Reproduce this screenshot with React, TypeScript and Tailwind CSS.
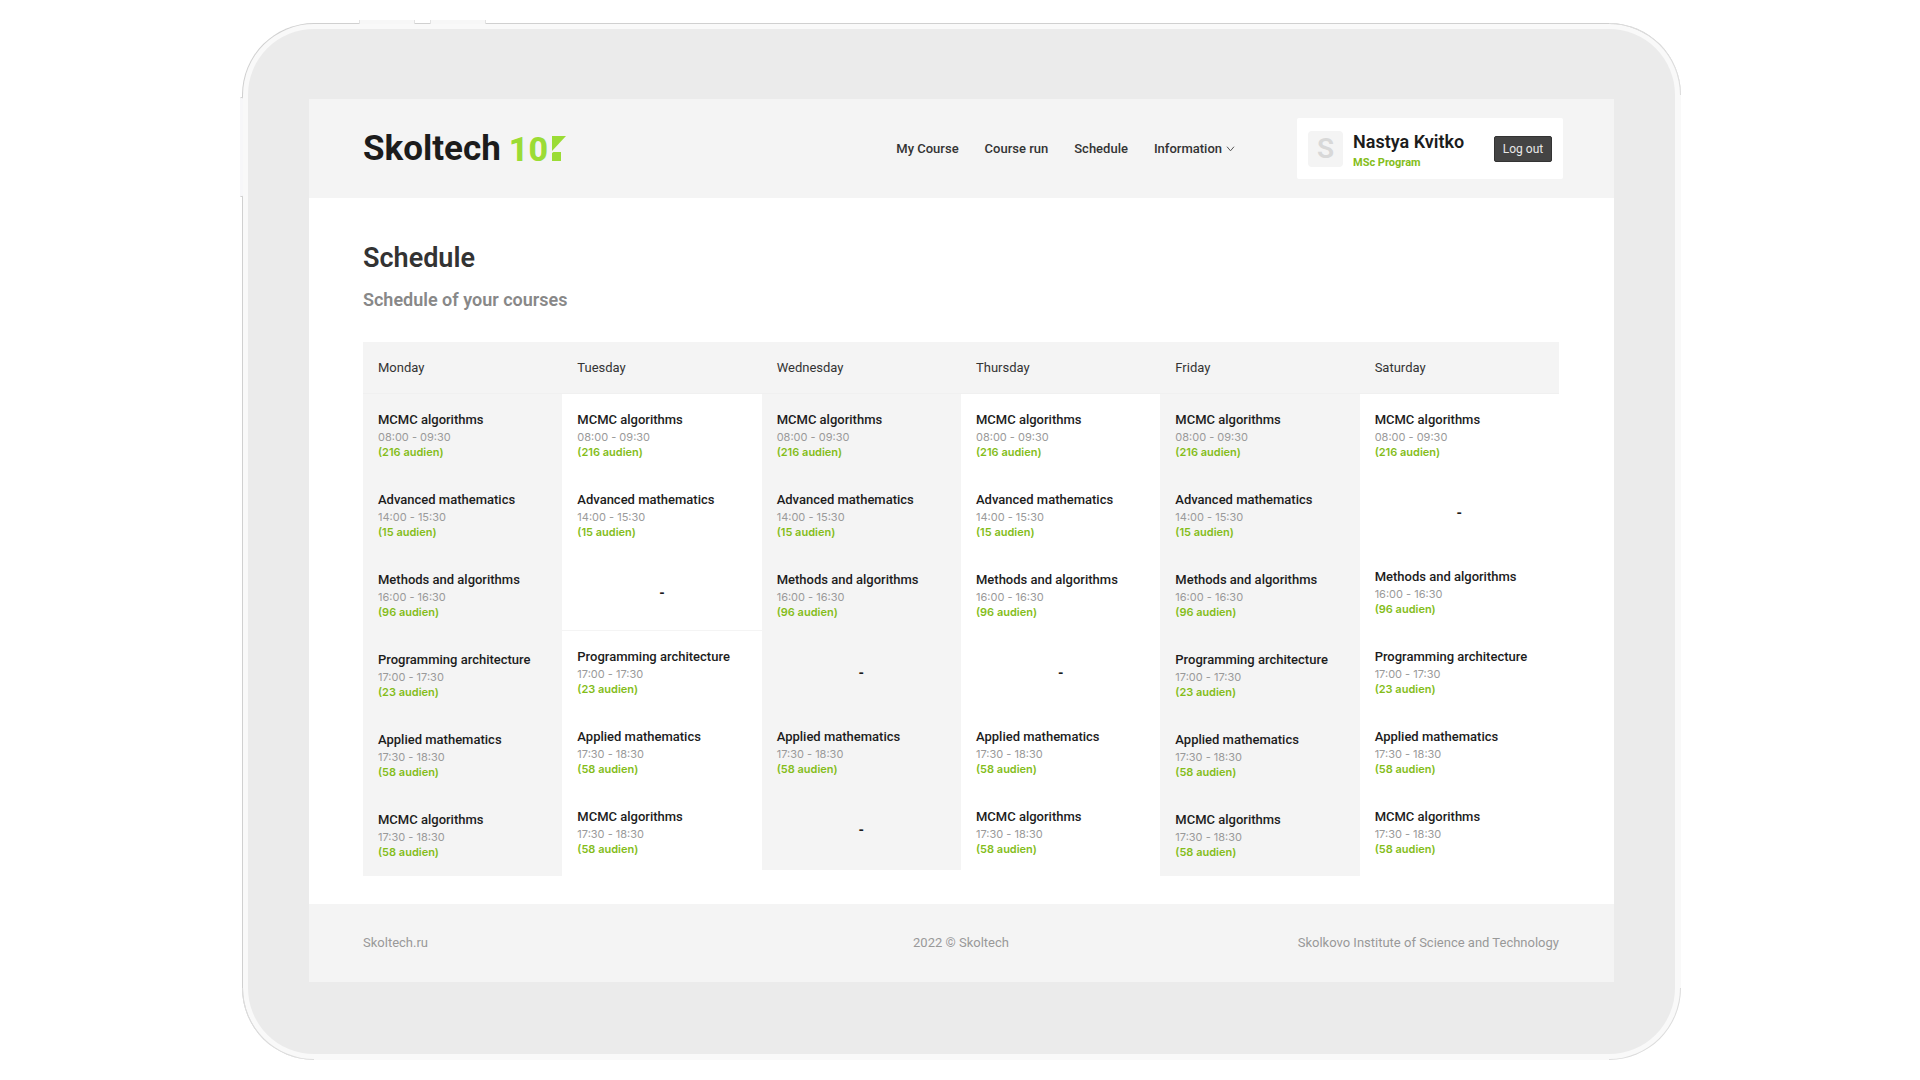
interface Lesson {
  title: string;
  time: string;
  room: string;
}

interface Day {
  name: string;
  lessons: (Lesson | null)[];
}

const mcmcMorning: Lesson = { title: "MCMC algorithms", time: "08:00 - 09:30", room: "(216 audien)" };
const advanced: Lesson = { title: "Advanced mathematics", time: "14:00 - 15:30", room: "(15 audien)" };
const methods: Lesson = { title: "Methods and algorithms", time: "16:00 - 16:30", room: "(96 audien)" };
const programming: Lesson = { title: "Programming architecture", time: "17:00 - 17:30", room: "(23 audien)" };
const applied: Lesson = { title: "Applied mathematics", time: "17:30 - 18:30", room: "(58 audien)" };
const mcmcEvening: Lesson = { title: "MCMC algorithms", time: "17:30 - 18:30", room: "(58 audien)" };

// null is a free slot
const days: Day[] = [
  { name: "Monday", lessons: [mcmcMorning, advanced, methods, programming, applied, mcmcEvening] },
  { name: "Tuesday", lessons: [mcmcMorning, advanced, null, programming, applied, mcmcEvening] },
  { name: "Wednesday", lessons: [mcmcMorning, advanced, methods, null, applied, null] },
  { name: "Thursday", lessons: [mcmcMorning, advanced, methods, null, applied, mcmcEvening] },
  { name: "Friday", lessons: [mcmcMorning, advanced, methods, programming, applied, mcmcEvening] },
  { name: "Saturday", lessons: [mcmcMorning, null, methods, programming, applied, mcmcEvening] },
];

function Logo() {
  return (
    <a href="#" className="flex items-center text-[35px] leading-10 font-bold text-[#1c1c1c]">
      Skoltech
      <span className="ml-2 text-[34px] font-extrabold text-[#9bdc35]">10</span>
      <svg width="14" height="26" viewBox="0 0 14 26" className="ml-1" fill="#9bdc35" aria-hidden="true">
        <path d="M0 0H14L0 15Z" />
        <path d="M0 25V17L1.5 16H9V25Z" />
      </svg>
    </a>
  );
}

function Header() {
  return (
    <header className="flex h-[99px] items-center justify-between bg-[#f4f4f4] pr-[51px] pl-[54px]">
      <Logo />
      <div className="flex items-center">
        <nav className="mr-[62px] flex items-center gap-[26px] text-[13px] font-medium text-[#333]">
          <a href="#">My Course</a>
          <a href="#">Course run</a>
          <a href="#">Schedule</a>
          <a href="#" className="flex items-center gap-1">
            Information
            <svg width="9" height="6" viewBox="0 0 9 6" fill="none" stroke="#555" aria-hidden="true">
              <path d="M1 0.7L4.5 4.8L8 0.7" />
            </svg>
          </a>
        </nav>
        <div className="flex h-[61px] w-[266px] items-center rounded-xs bg-white px-[11px]">
          <div className="flex h-9 w-[35px] items-center justify-center rounded-sm bg-[#f4f4f4] text-[28px] font-semibold text-[#d8d8d8]">
            S
          </div>
          <div className="ml-2.5 flex-1 pt-1">
            <div className="text-lg leading-6 font-semibold text-[#1c1c1c]">Nastya Kvitko</div>
            <div className="text-[11px] leading-[18px] font-bold text-[#84bd1a]">MSc Program</div>
          </div>
          <button className="h-[26px] w-[58px] rounded-xs border border-[#333] bg-[#444] text-xs text-[#e8e8e8]">
            Log out
          </button>
        </div>
      </div>
    </header>
  );
}

function LessonSlot({ lesson, divider }: { lesson: Lesson | null; divider: boolean }) {
  if (!lesson) {
    return (
      <li
        className={`flex h-[77px] items-center justify-center border-b pt-[3px] text-sm font-bold ${
          divider ? "border-[#f4f4f4]" : "border-transparent"
        }`}
      >
        -
      </li>
    );
  }

  return (
    <li className="h-20 px-[15px] pt-[18px]">
      <div className="text-[13px] leading-4 font-medium">{lesson.title}</div>
      <div className="mt-px font-[Inter] text-[11px] leading-4 text-[#9a9a9a]">{lesson.time}</div>
      <div className="font-[Inter] text-[11px] leading-3.5 font-semibold text-[#84bd1a]">{lesson.room}</div>
    </li>
  );
}

function Timetable() {
  return (
    <table className="w-full table-fixed border-collapse text-[#1c1c1c]">
      <thead>
        <tr className="h-[51px] border-b border-[#f0f0f0] bg-[#f4f4f4]">
          {days.map((day) => (
            <th key={day.name} scope="col" className="px-[15px] text-left text-[13px] font-normal text-[#333]">
              {day.name}
            </th>
          ))}
        </tr>
      </thead>
      <tbody>
        <tr>
          {days.map((day) => (
            <td key={day.name} className="group p-0 align-top">
              <ul className="pb-0.5 group-odd:bg-[#f4f4f4]">
                {day.lessons.map((lesson, i) => (
                  <LessonSlot key={i} lesson={lesson} divider={day.name === "Tuesday"} />
                ))}
              </ul>
            </td>
          ))}
        </tr>
      </tbody>
    </table>
  );
}

function Footer() {
  return (
    <footer className="grid h-[78px] grid-cols-3 items-center bg-[#f4f4f4] pr-[55px] pl-[54px] text-[13px] text-[#999]">
      <a href="#">Skoltech.ru</a>
      <div className="text-center">2022 © Skoltech</div>
      <div className="text-right">Skolkovo Institute of Science and Technology</div>
    </footer>
  );
}

export default function App() {
  return (
    <div className="min-h-screen bg-white pt-[23px] pr-[239px] pb-5 pl-[242px] font-[Roboto,sans-serif]">
      <div className="relative rounded-[72px] border-t border-l border-[#d0d0d0] bg-[#f9f9f9] p-[5px] pr-1.5 pb-1.5">
        {/* hardware buttons */}
        <div className="absolute -top-1 left-[116px] h-1 w-14 border-x border-[#e2e2e2] bg-[#f7f7f7]" />
        <div className="absolute -top-1 left-[187px] h-1 w-14 border-x border-[#e2e2e2] bg-[#f7f7f7]" />
        <div className="absolute top-[73px] -left-[3px] h-[100px] w-[3px] rounded-xs border-y border-[#d0d0d0] bg-[#f7f7f9]" />

        {/* corner outlines */}
        <div className="absolute -top-px right-0 size-[72px] rounded-tr-[72px] border-t border-r border-[#dcdcdc]" />
        <div className="absolute right-0 bottom-0 size-[72px] rounded-br-[72px] border-r border-b border-[#dcdcdc]" />
        <div className="absolute bottom-0 -left-px size-[72px] rounded-bl-[72px] border-b border-l border-[#dcdcdc]" />

        <div className="relative rounded-[66px] bg-[#ebebeb] px-[61px] pt-[70px] pb-[72px]">
          <div className="bg-white">
            <Header />
            <main className="pt-10 pr-[55px] pb-7 pl-[54px]">
              <h1 className="text-[27px] leading-10 font-semibold text-[#333]">Schedule</h1>
              <h2 className="mt-2 mb-7 text-lg leading-7 font-semibold text-[#888]">Schedule of your courses</h2>
              <Timetable />
            </main>
            <Footer />
          </div>
        </div>
      </div>
    </div>
  );
}
